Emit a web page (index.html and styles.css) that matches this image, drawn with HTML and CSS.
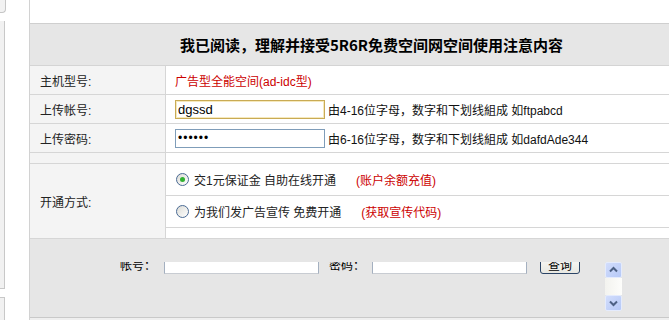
FILE: index.html
```html
<!DOCTYPE html>
<html lang="zh-CN">
  <head>
    <meta charset="UTF-8" />
    <title>开通空间</title>
    <link rel="stylesheet" href="styles.css">
  </head>
  <body>
    <div class="page">
      <div class="side">
        <div class="side-tab"></div>
        <div class="side-box"></div>
        <div class="side-box side-box-last"></div>
      </div>

      <div class="main">
        <div class="top-space"></div>
        <div class="title">我已阅读，理解并接受5R6R免费空间网空间使用注意内容</div>

        <div class="row">
          <div class="label">主机型号:</div>
          <div class="value red">广告型全能空间(ad-idc型)</div>
        </div>
        <div class="row">
          <div class="label">上传帐号:</div>
          <div class="value">
            <input type="text" class="field field-focus" value="dgssd" />
            <span class="hint">由4-16位字母，数字和下划线組成 如ftpabcd</span>
          </div>
        </div>
        <div class="row">
          <div class="label">上传密码:</div>
          <div class="value">
            <input type="password" class="field" value="123456" />
            <span class="hint">由6-16位字母，数字和下划线組成 如dafdAde344</span>
          </div>
        </div>
        <div class="row row-empty">
          <div class="label"></div>
          <div class="value"></div>
        </div>
        <div class="row row-group">
          <div class="label">开通方式:</div>
          <div class="options">
            <div class="option">
              <span class="radio"><span class="dot"></span></span>
              <span>交1元保证金 自助在线开通</span>
              <span class="red link">(账户余额充值)</span>
            </div>
            <div class="option">
              <span class="radio"></span>
              <span>为我们发广告宣传 免费开通</span>
              <span class="red link">(获取宣传代码)</span>
            </div>
            <div class="option option-empty"></div>
          </div>
        </div>

        <div class="bottom">
          <div class="frame">
            <div class="frame-view">
              <div class="query">
                <span>帐号：</span>
                <input type="text" class="qfield" />
                <span class="qlabel">密码：</span>
                <input type="text" class="qfield qfield-pass" />
                <button type="button" class="qbtn">查询</button>
              </div>
            </div>
            <div class="scrollbar">
              <div class="sb-btn">
                <svg width="15" height="14" viewBox="0 0 15 14"><polyline points="4,8.5 7.5,5 11,8.5" fill="none" stroke="#4d6185" stroke-width="2"/></svg>
              </div>
              <div class="sb-track"></div>
              <div class="sb-btn">
                <svg width="15" height="14" viewBox="0 0 15 14"><polyline points="4,5.5 7.5,9 11,5.5" fill="none" stroke="#4d6185" stroke-width="2"/></svg>
              </div>
            </div>
          </div>
        </div>
        <div class="foot"></div>
      </div>
    </div>
  </body>
</html>
```

FILE: styles.css
```css
body {
  margin: 0;
  overflow: hidden;
  background: #fff;
  color: #222;
  font-family: "Liberation Sans", "Noto Sans CJK SC", sans-serif;
  font-size: 12px;
}
.page {
  display: flex;
  width: 713px;
  height: 320px;
  overflow: hidden;
}
.side {
  width: 29px;
  flex-shrink: 0;
}
.side-tab {
  width: 5px;
  height: 12px;
  background: #f2f2f2;
  border-right: 1px solid #c6c6c6;
  border-bottom: 1px solid #c6c6c6;
  border-bottom-right-radius: 4px;
}
.side-box {
  width: 4px;
  height: 267px;
  margin-top: 8px;
  background: #f1f1f1;
  border-right: 1px solid #c8c8c8;
  border-bottom: 1px solid #c8c8c8;
}
.side-box-last {
  margin-top: 8px;
  height: 40px;
  border-top: 1px solid #c8c8c8;
  border-bottom: none;
}
.main {
  width: 683px;
  flex-shrink: 0;
  border-left: 1px solid #d2d2d2;
}
.top-space {
  height: 23px;
}
.title {
  height: 41px;
  display: flex;
  align-items: center;
  justify-content: center;
  background: #e6e6e6;
  border-top: 1px solid #cfcfcf;
  border-bottom: 1px solid #d4d4d4;
  color: #000;
  font-size: 15px;
  font-weight: bold;
  font-family: "Noto Sans CJK SC", sans-serif;
}
.row {
  display: flex;
  height: 28px;
  border-bottom: 1px solid #d6d6d6;
}
.row-empty {
  height: 10px;
}
.row-group {
  height: 74px;
}
.label {
  width: 125px;
  flex-shrink: 0;
  padding-left: 10px;
  display: flex;
  align-items: center;
  background: #f4f4f4;
  border-right: 1px solid #d6d6d6;
}
.value {
  flex: 1;
  padding-left: 9px;
  display: flex;
  align-items: center;
}
.red {
  color: #cc0000;
}
.field {
  box-sizing: border-box;
  width: 150px;
  height: 19px;
  margin: 0;
  padding: 0 2px;
  border: 1px solid #7f9db9;
  font-family: "Liberation Sans", sans-serif;
  font-size: 13px;
  color: #000;
  outline: none;
}
.field-focus {
  border-color: #c9ab55;
  box-shadow: inset 0 0 0 1px #f6e9bd;
}
.field[type="password"] {
  font-size: 12px;
  letter-spacing: 1px;
}
.hint {
  margin-left: 3px;
  color: #111;
}
.options {
  flex: 1;
  display: flex;
  flex-direction: column;
}
.option {
  height: 31px;
  padding-left: 10px;
  display: flex;
  align-items: center;
  border-bottom: 1px solid #d6d6d6;
}
.option-empty {
  height: 10px;
  border-bottom: none;
}
.radio {
  box-sizing: border-box;
  width: 13px;
  height: 13px;
  margin-right: 5px;
  display: flex;
  align-items: center;
  justify-content: center;
  border: 1px solid #4a6a94;
  border-radius: 50%;
  background: linear-gradient(135deg, #dcdcd6, #ffffff);
}
.dot {
  width: 5px;
  height: 5px;
  border-radius: 50%;
  background: #31b131;
}
.link {
  margin-left: 20px;
}
.bottom {
  display: flow-root;
  height: 78px;
  background: #e6e6e6;
  border-bottom: 1px solid #c9c9c9;
}
.foot {
  height: 3px;
  background: #efefef;
}
.frame {
  display: flex;
  width: 522px;
  height: 49px;
  margin: 23px 0 0 70px;
}
.frame-view {
  flex: 1;
  overflow: hidden;
}
.query {
  display: flex;
  align-items: center;
  height: 19px;
  margin-top: -7px;
  padding-left: 20px;
  color: #000;
}
.qfield {
  box-sizing: border-box;
  width: 155px;
  height: 19px;
  margin: 0 0 0 8px;
  border: 1px solid #a4b0c0;
  border-bottom-color: #c8ccd2;
  background: #fff;
}
.qlabel {
  margin-left: 10px;
}
.qfield-pass {
  margin-left: 7px;
}
.qbtn {
  box-sizing: border-box;
  width: 40px;
  height: 19px;
  margin-left: 13px;
  padding: 0;
  border: 1px solid #2b4466;
  border-radius: 3px;
  background: linear-gradient(#fbfbf9, #e8e8e2);
  font-size: 12px;
  font-family: "Noto Sans CJK SC", sans-serif;
}
.scrollbar {
  width: 17px;
  display: flex;
  flex-direction: column;
}
.sb-btn {
  box-sizing: border-box;
  height: 16px;
  display: flex;
  align-items: center;
  justify-content: center;
  border: 1px solid #e4ebfd;
  border-radius: 2px;
  background: linear-gradient(135deg, #d2ddfc, #b6c9f7);
}
.sb-track {
  flex: 1;
  background: linear-gradient(to right, #f3f3ef, #fdfdfb);
}
```
